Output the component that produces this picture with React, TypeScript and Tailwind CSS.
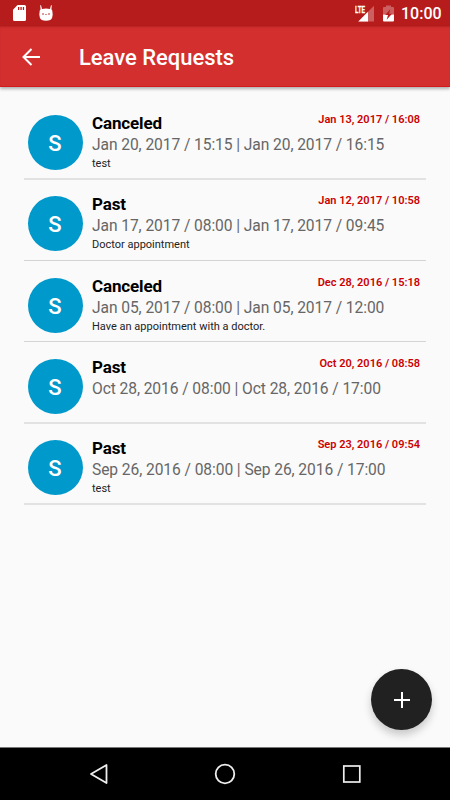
type LeaveRequest = { status: string; period: string; note: string; created: string; thin?: boolean };

const requests: LeaveRequest[] = [
  { status: "Canceled", period: "Jan 20, 2017 / 15:15 | Jan 20, 2017 / 16:15", note: "test", created: "Jan 13, 2017 / 16:08" },
  { status: "Past", period: "Jan 17, 2017 / 08:00 | Jan 17, 2017 / 09:45", note: "Doctor appointment", created: "Jan 12, 2017 / 10:58", thin: true },
  { status: "Canceled", period: "Jan 05, 2017 / 08:00 | Jan 05, 2017 / 12:00", note: "Have an appointment with a doctor.", created: "Dec 28, 2016 / 15:18", thin: true },
  { status: "Past", period: "Oct 28, 2016 / 08:00 | Oct 28, 2016 / 17:00", note: "", created: "Oct 20, 2016 / 08:58" },
  { status: "Past", period: "Sep 26, 2016 / 08:00 | Sep 26, 2016 / 17:00", note: "test", created: "Sep 23, 2016 / 09:54" },
];

function StatusBar() {
  return (
    <div className="flex h-[26px] items-center bg-[#b71c1c] pr-[9px] pl-[13px] text-white">
      <svg className="h-4 w-[13px]" viewBox="0 0 13 16">
        <path fill="#fff" fillRule="evenodd" d="M4.5 0H11.5Q13 0 13 1.5V14.5Q13 16 11.5 16H1.5Q0 16 0 14.5V4.7ZM5 2V5H6.3V2ZM7.4 2V5H8.7V2ZM9.8 2V5H11.1V2Z" />
      </svg>
      <svg className="ml-[13px] h-[17px] w-[14px]" viewBox="0 0 14 17">
        <path fill="#fff" d="M1.2 .2L2 .2L3 3.9Q7 3 11 3.9L12 .2L12.8 .2L12.4 4.6Q13.3 5 13.3 6L13.7 9.5L13.2 12.5Q12.2 15.7 7 15.7Q1.8 15.7 .8 12.5L.3 9.5L.7 6Q.7 5 1.6 4.6Z" />
        <circle cx="4" cy="9" r=".8" fill="#b71c1c" />
        <circle cx="10" cy="9" r=".8" fill="#b71c1c" />
        <path d="M6 9.5H8" stroke="#b71c1c" strokeWidth=".5" />
      </svg>
      <svg className="ml-auto h-[17px] w-5" viewBox="0 0 20 17">
        <path fill="#fff" fillOpacity=".3" d="M19 .8V16.5H3.3Z" />
        <path fill="#fff" d="M13 6.8V16.5H3.3Z" />
        <rect x="0" y="0" width="10.5" height="8.5" fill="#b71c1c" />
        <text x="0" y="8.2" fill="#fff" stroke="#fff" strokeWidth=".3" fontSize="9.5" fontWeight="700" textLength="10" lengthAdjust="spacingAndGlyphs">LTE</text>
      </svg>
      <svg className="ml-[8px] h-[17px] w-[11px]" viewBox="0 0 11 17">
        <path fill="#fff" fillOpacity=".3" d="M3 .5H8V2H10Q11 2 11 3V9.5H0V3Q0 2 1 2H3Z" />
        <path fill="#fff" d="M0 9.5H11V15.5Q11 16.5 10 16.5H1Q0 16.5 0 15.5Z" />
        <path fill="#b71c1c" d="M7.3 4.2L2.2 10H5L3.7 14.7L9 8.8H6.1Z" />
      </svg>
      <span className="ml-[7px] w-[40px] pt-[2px] text-[16px] leading-[24px] font-medium whitespace-nowrap">10:00</span>
    </div>
  );
}

function Toolbar() {
  return (
    <header className="relative flex h-[61px] items-center border-b border-[#d31b1b] bg-[#d32f2f] pt-[2px] pl-[22px] text-white shadow-[0_2px_3px_rgba(0,0,0,0.3),inset_0_2px_2px_-1px_rgba(120,0,0,0.3)]">
      <svg className="h-[18px] w-[18px]" viewBox="0 0 18 18" fill="none" stroke="#fff" strokeWidth="2">
        <path d="M18 9H1.5M9.5 1L1.5 9L9.5 17" />
      </svg>
      <h1 className="ml-[39px] pt-[2px] text-[22px] leading-[30px] font-medium tracking-[-0.03px] whitespace-nowrap">Leave Requests</h1>
    </header>
  );
}

function RequestRow({ request }: { request: LeaveRequest }) {
  const divider = request.thin ? "border-b border-[#d4d4d4]" : "border-b-2 border-[#e2e2e2]";
  return (
    <li className={`flex h-[81.25px] items-start pt-[16.5px] pl-[3.5px] ${divider}`}>
      <div className="flex h-[55px] w-[55px] shrink-0 items-center justify-center rounded-full bg-[#0099cc] pt-[2px] text-[22px] font-medium text-white">S</div>
      <div className="ml-[9.5px] grow pr-[6px] whitespace-nowrap">
        <div className="flex h-[19px] items-start justify-between">
          <h2 className="text-[17px] leading-[17px] font-bold tracking-[-0.15px] text-black">{request.status}</h2>
          <time className="text-[11px] leading-[10px] font-semibold text-[#cc0000]">{request.created}</time>
        </div>
        <p className="h-[22px] text-[15.6px] leading-[22px] tracking-[-0.08px] text-[#666]">{request.period}</p>
        <p className="text-[11px] leading-[15px] text-[#222]">{request.note}</p>
      </div>
    </li>
  );
}

function NavigationBar() {
  return (
    <nav className="flex h-[53px] items-center justify-between border-t border-[#777] bg-black pr-[88px] pl-[88px]">
      <svg className="h-[22px] w-5" viewBox="0 0 20 22" fill="none" stroke="#eee" strokeWidth="1.8" strokeLinejoin="round">
        <path d="M18.5 2V20L3 11Z" />
      </svg>
      <svg className="h-[22px] w-[22px]" viewBox="0 0 22 22" fill="none" stroke="#eee" strokeWidth="1.8">
        <circle cx="11" cy="11" r="9.3" />
      </svg>
      <svg className="h-[20px] w-[20px]" viewBox="0 0 20 20" fill="none" stroke="#eee" strokeWidth="1.7">
        <rect x="1.8" y="2" width="16" height="16" />
      </svg>
    </nav>
  );
}

export default function App() {
  return (
    <div className="relative flex h-[800px] w-[450px] flex-col overflow-hidden bg-[#fafafa] font-[Roboto,sans-serif]">
      <StatusBar />
      <Toolbar />
      <main className="grow px-6 pt-[11.7px]">
        <ul>
          {requests.map((request) => <RequestRow key={request.created} request={request} />)}
        </ul>
      </main>
      <button aria-label="Add request" className="absolute right-[18px] bottom-[70px] flex h-[61px] w-[61px] items-center justify-center rounded-full bg-[#212121] shadow-[0_5px_8px_rgba(0,0,0,0.2)]">
        <svg className="h-4 w-4" viewBox="0 0 16 16" fill="none" stroke="#fff" strokeWidth="2"><path d="M8 0V16M0 8H16" /></svg>
      </button>
      <NavigationBar />
    </div>
  );
}
